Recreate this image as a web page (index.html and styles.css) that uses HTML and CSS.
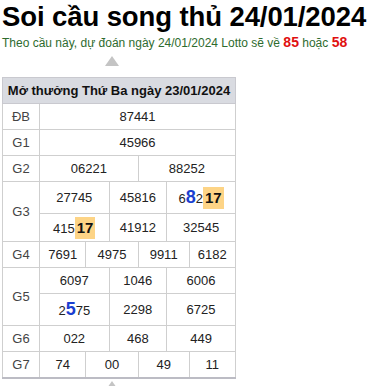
FILE: index.html
```html
<!DOCTYPE html>
<html lang="vi">
<head>
  <meta charset="UTF-8">
  <meta name="viewport" content="width=device-width, initial-scale=1.0">
  <title>Soi cầu song thủ 24/01/2024</title>
  <link rel="stylesheet" href="styles.css">
</head>
<body>
  <h1>Soi cầu song thủ 24/01/2024</h1>
  <p class="predict">Theo cầu này, dự đoán ngày 24/01/2024 Lotto sẽ về <b>85</b> hoặc <b>58</b></p>

  <div class="arrow"></div>

  <table class="result">
    <tr>
      <th colspan="13">Mở thưởng Thứ Ba ngày 23/01/2024</th>
    </tr>
    <tr>
      <td class="prize">ĐB</td>
      <td colspan="12">87441</td>
    </tr>
    <tr>
      <td class="prize">G1</td>
      <td colspan="12">45966</td>
    </tr>
    <tr>
      <td class="prize">G2</td>
      <td colspan="6">06221</td>
      <td colspan="6">88252</td>
    </tr>
    <tr class="tall">
      <td class="prize" rowspan="2">G3</td>
      <td colspan="4">27745</td>
      <td colspan="4">45816</td>
      <td colspan="4">6<span class="pos">8</span>2<span class="hit">17</span></td>
    </tr>
    <tr class="mid">
      <td colspan="4">415<span class="hit">17</span></td>
      <td colspan="4">41912</td>
      <td colspan="4">32545</td>
    </tr>
    <tr>
      <td class="prize">G4</td>
      <td colspan="3">7691</td>
      <td colspan="3">4975</td>
      <td colspan="3">9911</td>
      <td colspan="3">6182</td>
    </tr>
    <tr>
      <td class="prize" rowspan="2">G5</td>
      <td colspan="4">6097</td>
      <td colspan="4">1046</td>
      <td colspan="4">6006</td>
    </tr>
    <tr class="tall">
      <td colspan="4">2<span class="pos">5</span>75</td>
      <td colspan="4">2298</td>
      <td colspan="4">6725</td>
    </tr>
    <tr>
      <td class="prize">G6</td>
      <td colspan="4">022</td>
      <td colspan="4">468</td>
      <td colspan="4">449</td>
    </tr>
    <tr>
      <td class="prize">G7</td>
      <td colspan="3">74</td>
      <td colspan="3">00</td>
      <td colspan="3">49</td>
      <td colspan="3">11</td>
    </tr>
  </table>

  <div class="arrow bottom"></div>
</body>
</html>
```

FILE: styles.css
```css
body {
  font-family: Arial, "Liberation Sans", sans-serif;
  margin: 0;
  padding: 0 2px;
  background-color: #fff;
  color: #222;
}

h1 {
  font-size: 27.5px;
  font-weight: bold;
  color: #000;
  margin: 0;
  line-height: 33px;
  white-space: nowrap;
  letter-spacing: -0.1px;
}

.predict {
  margin: 0;
  font-size: 12px;
  color: #2e6b2e;
  line-height: 18px;
  white-space: nowrap;
}

.predict b {
  color: #e01010;
  font-size: 14px;
}

.arrow {
  width: 0;
  height: 0;
  margin: 4px 0 0 103px;
  border-left: 7px solid transparent;
  border-right: 7px solid transparent;
  border-bottom: 10px solid #c4c4c4;
}

.arrow.bottom {
  margin-top: 2px;
}

.result {
  width: 234px;
  border-collapse: collapse;
  border-bottom: 2px solid #bcbcc4;
  font-size: 13px;
  color: #222;
  margin-top: 11px;
}

.result th {
  background-color: #d9dbe1;
  font-size: 13px;
  font-weight: bold;
  color: #111;
  height: 25px;
  padding: 0;
  border: 1px solid #c9c9cf;
}

.result td {
  border: 1px solid #cfcfcf;
  text-align: center;
  height: 25px;
  padding: 0;
  width: 16px;
}

.result td.prize {
  width: 36px;
  color: #444;
}

.result tr.tall td {
  height: 31px;
}

.result tr.mid td {
  height: 27px;
}

.hit {
  display: inline-block;
  background-color: #fdd486;
  font-weight: bold;
  font-size: 15px;
  padding: 3px 2px;
  line-height: 16px;
  color: #111;
}

.pos {
  color: #1b3fd0;
  font-weight: bold;
  font-size: 18px;
}
```
